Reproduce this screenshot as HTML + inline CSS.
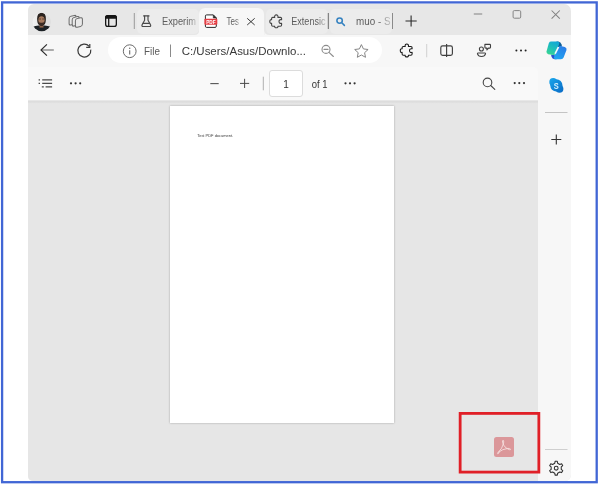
<!DOCTYPE html>
<html lang="en">
<head>
<meta charset="utf-8">
<title>Test PDF document</title>
<style>
html,body{margin:0;padding:0;}
body{width:600px;height:485px;background:#fff;position:relative;overflow:hidden;font-family:"Liberation Sans",sans-serif;color:#333;}
.abs{position:absolute;}
#frame{left:0;top:0;width:600px;height:485px;}
#win{left:28.3px;top:4px;width:542.6px;height:476.7px;border-radius:6px 7px 6px 5px;background:#e7e7e7;overflow:hidden;}
#acttab{left:171px;top:4px;width:65px;height:28px;background:#f7f7f7;border-radius:6px 6px 0 0;}
.itab{top:5px;height:24.5px;border-radius:5px;background:#ececec;}
#addr{left:0;top:31px;width:543px;height:446px;background:#f7f7f7;}
#pill{left:80px;top:33px;width:274px;height:26px;border-radius:13px;background:#fff;}
#pdfbar{left:0;top:63px;width:510px;height:33px;background:#f9f9f9;border-radius:0 5px 0 0;}
#content{left:0;top:96px;width:509.6px;height:381px;background:linear-gradient(to bottom,#f0f0f0 0px,#dedede 1px,#dcdcdc 1.8px,#e6e6e6 3.6px);}
#page{left:142px;top:101.5px;width:224px;height:317px;background:#fff;box-shadow:0 0 2px rgba(0,0,0,.3);}
#acro{left:466.2px;top:433px;width:19.6px;height:19.8px;border-radius:2.5px;background:#db979a;}
#pgin{left:240.6px;top:65.7px;width:32.5px;height:25.3px;border:1px solid #dcdcdc;border-radius:3px;background:#fff;}
svg{position:absolute;left:0;top:0;overflow:visible;will-change:transform;transform:translateZ(0);}
text{font-family:"Liberation Sans",sans-serif;}
</style>
</head>
<body>
<div id="frame" class="abs"></div>
<div id="win" class="abs">
  <div class="abs itab" style="left:108.5px;width:62px;"></div>
  <div class="abs itab" style="left:237.5px;width:62px;"></div>
  <div class="abs itab" style="left:301.5px;width:62px;"></div>
  <div id="acttab" class="abs"></div>
  <div id="addr" class="abs"></div>
  <div id="pill" class="abs"></div>
  <div id="pdfbar" class="abs"></div>
  <div id="content" class="abs"></div>
  <div id="page" class="abs"></div>
  <div id="acro" class="abs"></div>
  <div id="pgin" class="abs"></div>
</div>
<svg width="600" height="485" viewBox="0 0 600 485">
<defs>
  <filter id="b3" x="-5%" y="-50%" width="110%" height="200%"><feGaussianBlur stdDeviation="0.3"/></filter>
  <linearGradient id="avbg" x1="0" x2="1" y1="0" y2="0"><stop offset="0" stop-color="#f1f1f1"/><stop offset="0.5" stop-color="#e6e6e6"/><stop offset="1" stop-color="#dedede"/></linearGradient>
  <clipPath id="avc"><circle cx="41.7" cy="22" r="9.3"/></clipPath>
  <linearGradient id="fadeB" x1="0" x2="1" y1="0" y2="0"><stop offset="0.75" stop-color="#5c5c5c"/><stop offset="1" stop-color="#5c5c5c" stop-opacity="0.3"/></linearGradient>
  <linearGradient id="fadeA" x1="0" x2="1" y1="0" y2="0"><stop offset="0.6" stop-color="#5c5c5c"/><stop offset="1" stop-color="#5c5c5c" stop-opacity="0.25"/></linearGradient>
  <linearGradient id="cp1" x1="0.7" y1="0" x2="0.2" y2="1"><stop offset="0" stop-color="#12a8d6"/><stop offset="0.5" stop-color="#1fc0b8"/><stop offset="1" stop-color="#3ad690"/></linearGradient>
  <linearGradient id="cp2" x1="0.8" y1="0" x2="0.2" y2="1"><stop offset="0" stop-color="#2a7be6"/><stop offset="1" stop-color="#1fa6f2"/></linearGradient>
  <linearGradient id="sky" gradientUnits="userSpaceOnUse" x1="550" y1="79" x2="563" y2="92"><stop offset="0" stop-color="#19a4ea"/><stop offset="1" stop-color="#0a6cc6"/></linearGradient>
</defs>
<!-- blue frame -->
<rect x="2.1" y="2.4" width="594.6" height="479.8" fill="none" stroke="#4166d5" stroke-width="2.3"/>
<!-- active tab flares -->
<path d="M194.3 35 Q199.3 35 199.3 30 V35Z M269.3 35 Q264.3 35 264.3 30 V35Z" fill="#f7f7f7"/>
<!-- avatar -->
<g clip-path="url(#avc)">
  <circle cx="41.7" cy="22" r="9.3" fill="url(#avbg)"/>
  <path d="M31 27.6 Q35 25.6 38.6 25.4 H44.6 Q48.4 25.6 53 27.6 V33 H31Z" fill="#1c2125"/>
  <rect x="39.5" y="23" width="4" height="4.6" fill="#8a6048"/>
  <path d="M37.1 19 Q37.1 12.8 41.5 12.8 Q46 12.8 45.9 19 Q45.8 23.4 44.4 24.6 Q42.8 25.9 41.5 25.9 Q40.2 25.9 38.6 24.6 Q37.2 23.4 37.1 19Z" fill="#2a231f"/>
  <ellipse cx="41.5" cy="20.2" rx="3.1" ry="3.9" fill="#a77a5e"/>
  <path d="M38.3 21.2 Q38.6 25.6 41.5 25.7 Q44.4 25.6 44.7 21.2 Q43.6 22.9 41.5 22.7 Q39.4 22.9 38.3 21.2Z" fill="#3b2b24"/>
  <path d="M39.2 19 H41 M42.2 19 H44" stroke="#3b2b24" stroke-width="0.7"/>
</g>
<!-- workspaces -->
<g fill="#e9e9e9" stroke="#6a6a6a" stroke-width="1">
  <rect x="-3.5" y="-4.3" width="7" height="8.6" rx="1.8" transform="translate(72.6 20.2) skewY(-14)"/>
  <rect x="-3.5" y="-4.3" width="7" height="8.6" rx="1.8" transform="translate(75.7 21.3) skewY(-14)"/>
  <rect x="-3.5" y="-4.3" width="7" height="8.6" rx="1.8" transform="translate(78.9 22.5) skewY(-14)"/>
</g>
<!-- tab actions -->
<g fill="none" stroke="#161616" stroke-width="1.3">
  <rect x="105.65" y="15.65" width="10.7" height="10.7" rx="2.2"/>
  <path d="M108.7 18 V26.3"/>
</g>
<path d="M105.65 18.1 V17.8 Q105.65 15.65 107.85 15.65 H114.15 Q116.35 15.65 116.35 17.8 V18.1Z" fill="#161616" stroke="#161616" stroke-width="1.3"/>
<!-- tab separators -->
<path d="M134.3 13 V29" stroke="#9a9a9a" stroke-width="1"/>
<path d="M328.3 13 V29" stroke="#6b6b6b" stroke-width="1"/>
<path d="M392.5 13 V29" stroke="#8a8a8a" stroke-width="1"/>
<!-- flask -->
<g fill="none" stroke="#4a4a4a" stroke-width="1.15" stroke-linejoin="round" stroke-linecap="round">
  <path d="M143.6 15.9 H149"/>
  <path d="M144.6 16 V20.3 L142 25 Q141.6 26.5 143 26.5 H149.6 Q151 26.5 150.6 25 L148 20.3 V16"/>
  <path d="M143 23.4 H149.6"/>
</g>
<!-- pdf tab icon -->
<g>
  <path d="M206.6 14.9 H213.3 L216.3 18 V26.2 Q216.3 27.4 215.1 27.4 H206.6 Q205.4 27.4 205.4 26.2 V16.1 Q205.4 14.9 206.6 14.9Z" fill="#fff" stroke="#2b2b2b" stroke-width="1" stroke-linejoin="round"/>
  <path d="M213.3 14.9 V18 H216.3Z" fill="#2b2b2b" stroke="#2b2b2b" stroke-width="0.6" stroke-linejoin="round"/>
  <rect x="204.4" y="18.7" width="12.9" height="6" rx="0.9" fill="#e63e44"/>
  <text x="210.85" y="23.5" font-size="4.6" font-weight="bold" fill="#fff" text-anchor="middle" textLength="9.4" lengthAdjust="spacingAndGlyphs">PDF</text>
</g>
<!-- tab close -->
<path d="M247.2 18.3 L254.7 25 M254.7 18.3 L247.2 25" stroke="#3a3a3a" stroke-width="1.0" fill="none"/>
<!-- puzzle (tab) -->
<g stroke="#444"><path id="pz" d="M272.8 17.4 H274.7 C274.3 15.7 275.2 14.9 276.3 14.9 C277.4 14.9 278.3 15.7 277.9 17.4 H280.4 Q281.6 17.4 281.6 18.6 V19.7 C279.7 19.2 279 20.4 279 21.5 C279 22.6 279.7 23.8 281.6 23.3 V25 Q281.6 26.2 280.4 26.2 H277.9 C278.3 27.3 277.4 27.8 276.3 27.8 C275.2 27.8 274.3 27.3 274.7 26.2 H272.8 Q271.6 26.2 271.6 25 V23.3 C270.3 23.7 269.8 22.6 269.8 21.5 C269.8 20.4 270.3 19.3 271.6 19.7 V18.6 Q271.6 17.4 272.8 17.4Z" fill="none" stroke-width="1.1" stroke-linejoin="round"/></g>
<!-- blue search favicon -->
<g fill="none" stroke="#3582c0" stroke-width="1.55" stroke-linecap="round">
  <circle cx="339.6" cy="20.6" r="2.7"/>
  <path d="M341.8 22.8 L344.4 25.4"/>
</g>
<!-- new tab plus -->
<path d="M405.5 21 H416.7 M411.1 15.4 V26.6" stroke="#2a2a2a" stroke-width="1.1" fill="none"/>
<!-- window controls -->
<path d="M473.8 14 H482.2" stroke="#8a8a8a" stroke-width="1.1"/>
<rect x="513.1" y="10.6" width="7.6" height="7.6" rx="1.2" fill="none" stroke="#858585" stroke-width="1"/>
<path d="M551.6 10.5 L559.8 18.6 M559.8 10.5 L551.6 18.6" stroke="#808080" stroke-width="1.05" fill="none"/>
<!-- back -->
<path d="M53.8 50 H41.5" fill="none" stroke="#6e6e6e" stroke-width="1.1"/>
<path d="M46.9 44.4 L41 50 L46.9 55.6" fill="none" stroke="#2c2c2c" stroke-width="1.15" stroke-linejoin="miter"/>
<!-- refresh -->
<g fill="none" stroke="#3a3a3a" stroke-width="1.2">
  <path d="M90.75 49.7 A6.5 6.5 0 1 1 89.2 46.3"/>
  <path d="M89.8 44.1 V47.4 H86.2" stroke-linejoin="miter"/>
</g>
<!-- info -->
<g>
  <circle cx="129.7" cy="51.2" r="6.4" fill="none" stroke="#6a6a6a" stroke-width="1"/>
  <path d="M129.7 50.2 V54.6" stroke="#6a6a6a" stroke-width="1.1"/>
  <circle cx="129.7" cy="48.2" r="0.75" fill="#6a6a6a"/>
</g>
<path d="M170.5 44.5 V57" stroke="#8a8a8a" stroke-width="1"/>
<!-- zoom out -->
<g fill="none" stroke="#8c8c8c" stroke-width="1.1" stroke-linecap="round">
  <circle cx="326" cy="49.4" r="4"/>
  <path d="M324 49.4 H328"/>
  <path d="M329 52.4 L333.4 56.5"/>
</g>
<!-- star -->
<path d="M361.4 44.6 L363.4 48.9 L368.1 49.5 L364.6 52.7 L365.5 57.3 L361.4 55 L357.3 57.3 L358.2 52.7 L354.7 49.5 L359.4 48.9Z" fill="none" stroke="#858585" stroke-width="1" stroke-linejoin="round"/>
<!-- puzzle (toolbar) -->
<use href="#pz" transform="translate(130.5 29.1)" stroke="#1e1e1e"/>
<path d="M426.7 44 V57.3" stroke="#d0d0d0" stroke-width="1"/>
<!-- split screen -->
<g fill="none" stroke="#3f3f3f" stroke-width="1.15">
  <rect x="440.8" y="45.9" width="11.6" height="9.4" rx="1.8"/>
  <path d="M446.6 43.9 V57"/>
</g>
<!-- people/feedback -->
<g fill="none" stroke="#3f3f3f" stroke-width="1.1" stroke-linejoin="round">
  <circle cx="481.4" cy="49" r="2"/>
  <path d="M478 53 H485 Q485.7 53 485.5 53.9 Q484.8 56.5 481.5 56.5 Q478.2 56.5 477.5 53.9 Q477.3 53 478 53Z"/>
  <path d="M484.9 44.4 H489.7 Q490.5 44.4 490.5 45.2 V47.3 Q490.5 48.1 489.7 48.1 H488.5 L486.9 49.9 V48.1 H485.7 Q484.9 48.1 484.9 47.3Z"/>
</g>
<!-- toolbar dots -->
<g fill="#222"><circle cx="516.4" cy="50.4" r="1"/><circle cx="521" cy="50.4" r="1"/><circle cx="525.6" cy="50.4" r="1"/></g>
<!-- copilot -->
<g>
  <path d="M551 54.4 L556 55.4 L556.6 59.3 H554.6 Q552.2 59.1 551.6 57Z" fill="#2253d2"/>
  <path d="M556.5 41.6 H558.4 Q560.8 42 561.6 44.6 L562 46.6 L557 47.4Z" fill="#0f5f98"/>
  <path d="M548.9 43 Q549.5 41.6 551.2 41.6 H557.6 Q559.8 41.8 559.2 43.8 L555.8 53.6 Q555.2 55.3 553.4 55.1 L548.2 54.2 Q546 53.4 546.6 51.2Z" fill="url(#cp1)"/>
  <path d="M558.4 47.4 Q559 45.9 560.6 46.1 L564.8 47 Q567.1 47.8 566.5 50 L563.6 57.6 Q562.9 59.3 561 59.3 H555.4 Q553.3 59 554 57Z" fill="url(#cp2)"/>
  <path d="M557.7 46.7 L559.3 47.2 L555.9 54 L554.3 53.6Z" fill="#fff" opacity="0.92"/>
</g>
<!-- pdf toolbar: contents -->
<g stroke="#4a4a4a" stroke-width="1.2" fill="none">
  <path d="M42.2 79.8 H52.1 M42.2 83.3 H52.1 M45.6 86.8 H52.1"/>
  <path d="M38.6 79.8 H40 M38.6 83.3 H40 M41.8 86.8 H43.8"/>
</g>
<g fill="#333"><circle cx="71" cy="83.3" r="1.1"/><circle cx="75.6" cy="83.3" r="1.1"/><circle cx="80.2" cy="83.3" r="1.1"/></g>
<path d="M210.3 83.6 H218.7" stroke="#555" stroke-width="1.1"/>
<path d="M240 83.4 H249.2 M244.6 78.8 V88" stroke="#4a4a4a" stroke-width="1" fill="none"/>
<path d="M263.3 76.7 V90.3" stroke="#b0b0b0" stroke-width="1"/>
<g fill="#333"><circle cx="345.5" cy="83.3" r="1.1"/><circle cx="350" cy="83.3" r="1.1"/><circle cx="354.6" cy="83.3" r="1.1"/></g>
<g fill="none" stroke="#444" stroke-width="1.1" stroke-linecap="round">
  <circle cx="487.5" cy="82.4" r="4.3"/>
  <path d="M490.7 85.5 L494.8 89.4"/>
</g>
<g fill="#333"><circle cx="514.7" cy="83.1" r="1.1"/><circle cx="519.3" cy="83.1" r="1.1"/><circle cx="524" cy="83.1" r="1.1"/></g>
<!-- sidebar -->
<g>
  <g fill="url(#sky)"><circle cx="556.35" cy="85.4" r="6.1"/><circle cx="553.2" cy="82" r="3.9"/><circle cx="559.5" cy="88.8" r="3.9"/></g>
  <text x="556.35" y="88.6" font-size="9" font-weight="bold" fill="#d4f2ff" text-anchor="middle" textLength="5" lengthAdjust="spacingAndGlyphs">S</text>
</g>
<path d="M545 112.5 H567.5" stroke="#c4c4c4" stroke-width="1"/>
<path d="M551.3 139.5 H561.3 M556.3 134.5 V144.5" stroke="#333" stroke-width="1.1" fill="none"/>
<path d="M545 449.5 H567.5" stroke="#cfcfcf" stroke-width="1"/>
<!-- gear -->
<g fill="none" stroke="#2e2e2e" stroke-width="1.05" stroke-linejoin="round">
  <path d="M557.65 473.19 L557.30 475.11 L555.10 475.11 L554.75 473.19 L552.60 471.95 L550.76 472.61 L549.66 470.71 L551.15 469.44 L551.15 466.96 L549.66 465.69 L550.76 463.79 L552.60 464.45 L554.75 463.21 L555.10 461.29 L557.30 461.29 L557.65 463.21 L559.80 464.45 L561.64 463.79 L562.74 465.69 L561.25 466.96 L561.25 469.44 L562.74 470.71 L561.64 472.61 L559.80 471.95Z"/>
  <circle cx="556.2" cy="468.2" r="1.9"/>
</g>
<!-- red highlight box -->
<rect x="460.15" y="413.4" width="78.7" height="58.7" fill="none" stroke="#e01f27" stroke-width="2.8"/>
<!-- acrobat glyph -->
<g fill="none" stroke="#f7e6e6" stroke-width="0.95" stroke-linecap="round" stroke-linejoin="round" opacity="0.85">
  <path d="M498.2 452.4 Q502.4 448.6 503.6 443.2 Q504 440.4 503.1 440.2 Q502.1 440.4 502.7 442.8 Q504 447.6 509.4 449.7 Q510.7 449.9 510.5 449.1 Q510 448.2 507.8 448.4 Q502.6 449 498.2 452.4 Q497.1 453.4 497.7 453.8 Q498.5 453.8 499.1 452.7"/>
</g>

<text x="162" y="24.8" font-size="10" fill="url(#fadeB)" textLength="34" lengthAdjust="spacingAndGlyphs">Experim</text>
<text x="226.4" y="24.5" font-size="10" fill="url(#fadeB)" textLength="12.6" lengthAdjust="spacingAndGlyphs">Tes</text>
<text x="291.3" y="24.8" font-size="10" fill="url(#fadeB)" textLength="34.2" lengthAdjust="spacingAndGlyphs">Extensic</text>
<text x="356" y="24.8" font-size="10" fill="url(#fadeA)" textLength="34.5" lengthAdjust="spacingAndGlyphs">muo - S</text>
<text x="144" y="54.5" font-size="11.7" fill="#5a5a5a" textLength="15.9" lengthAdjust="spacingAndGlyphs">File</text>
<text x="181.7" y="54.5" font-size="11.6" fill="#383838" textLength="124.3" lengthAdjust="spacingAndGlyphs">C:/Users/Asus/Downlo...</text>
<text x="286" y="87.5" font-size="10" fill="#333" text-anchor="middle">1</text>
<text x="311.7" y="87.5" font-size="10.4" fill="#333" textLength="15.8" lengthAdjust="spacingAndGlyphs">of 1</text>
<text x="197.2" y="137.3" font-size="4.4" fill="#3a3a3a" textLength="36" lengthAdjust="spacingAndGlyphs" filter="url(#b3)">Test PDF document.</text>

</svg>
</body>
</html>
